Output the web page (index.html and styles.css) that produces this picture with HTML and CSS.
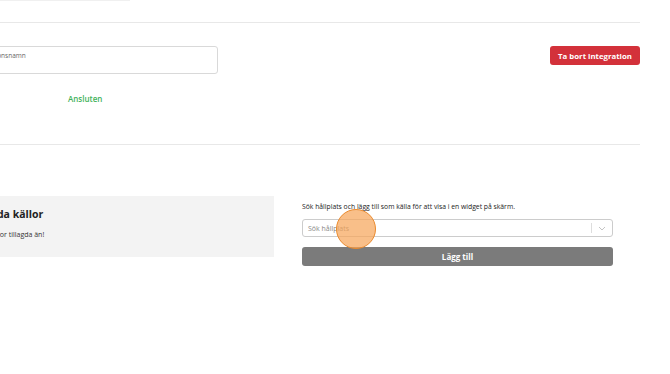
FILE: index.html
```html
<!DOCTYPE html>
<html lang="sv">
<head>
    <meta charset="UTF-8">
    <meta name="viewport" content="width=device-width, initial-scale=1.0">
    <title>Integration</title>
    <link rel="stylesheet" href="styles.css">
</head>
<body>
    <div class="page">
        <div class="top-strip"></div>

        <section class="integration">
            <div class="integration-row">
                <div class="name-field">
                    <span class="name-label">Organisationsnamn</span>
                </div>
                <button type="button" class="btn-danger">Ta bort integration</button>
            </div>
            <div class="status">Ansluten</div>
        </section>

        <section class="sources">
            <div class="sources-list">
                <h3>Tillagda källor</h3>
                <p>Inga källor tillagda än!</p>
            </div>

            <div class="sources-add">
                <p class="hint">Sök hållplats och lägg till som källa för att visa i en widget på skärm.</p>
                <div class="select">
                    <span class="select-placeholder">Sök hållplats</span>
                    <span class="select-sep"></span>
                    <svg class="select-arrow" width="8" height="5" viewBox="0 0 8 5">
                        <path d="M1 1l3 3 3-3" fill="none" stroke="#c4c4c4" stroke-width="1"/>
                    </svg>
                </div>
                <button type="button" class="btn-add">Lägg till</button>
            </div>
        </section>
    </div>

    <!-- click marker from the recording -->
    <div class="click-marker"></div>
</body>
</html>
```

FILE: styles.css
```css
* {
    margin: 0;
    padding: 0;
    box-sizing: border-box;
}

body {
    font-family: 'Open Sans', 'Noto Sans', sans-serif;
    background: #fff;
    color: #333;
    overflow: hidden;
    width: 670px;
    height: 374px;
    position: relative;
}

.page {
    margin-left: -40px;
    width: 680px;
}

.top-strip {
    width: 170px;
    height: 1px;
    border-bottom: 1px solid #f0f0f0;
}

.integration {
    margin-top: 21px;
    border-top: 1px solid #e8e8e8;
    border-bottom: 1px solid #e8e8e8;
    padding-top: 23px;
    height: 123px;
}

.integration-row {
    display: flex;
    justify-content: space-between;
    align-items: flex-start;
}

.name-field {
    width: 258px;
    height: 28px;
    border: 1px solid #d9d9d9;
    border-radius: 3px;
    padding: 4px 5px;
    font-size: 6.5px;
    line-height: 9px;
}

.name-label {
    color: #666;
}

.btn-danger {
    font-family: inherit;
    width: 90px;
    height: 19px;
    background: #d3313a;
    border: none;
    border-radius: 3px;
    color: #fff;
    font-size: 7.8px;
    font-weight: 700;
}

.status {
    margin: 19px 0 0 108px;
    font-size: 8px;
    font-weight: 600;
    color: #43b25b;
}

.sources {
    margin-top: 51px;
    display: grid;
    grid-template-columns: 314px 311px;
    column-gap: 28px;
    align-items: start;
}

.sources-list {
    background: #f3f3f3;
    height: 61px;
    padding: 11px 6px 11px 9px;
}

.sources-list h3 {
    font-size: 10.5px;
    font-weight: 700;
    color: #222;
}

.sources-list p {
    margin-top: 9px;
    padding-left: 4px;
    font-size: 7px;
    color: #333;
}

.hint {
    font-size: 6.8px;
    color: #222;
    margin-top: 6px;
}

.select {
    margin-top: 8px;
    height: 18px;
    border: 1px solid #ccc;
    border-radius: 3px;
    display: flex;
    align-items: center;
    padding: 0 6px 0 5px;
}

.select-placeholder {
    flex: 1;
    font-size: 7px;
    color: #888;
}

.select-sep {
    width: 1px;
    height: 10px;
    background: #ddd;
    margin-right: 6px;
}

.btn-add {
    font-family: inherit;
    margin-top: 10px;
    width: 100%;
    height: 19px;
    background: #7b7b7b;
    border: none;
    border-radius: 3px;
    color: #fff;
    font-size: 8px;
    font-weight: 700;
}

.click-marker {
    position: absolute;
    left: 336px;
    top: 209px;
    width: 40px;
    height: 40px;
    border-radius: 50%;
    background: rgba(246, 166, 92, 0.72);
    border: 1.5px solid #ea8a2e;
}
```
